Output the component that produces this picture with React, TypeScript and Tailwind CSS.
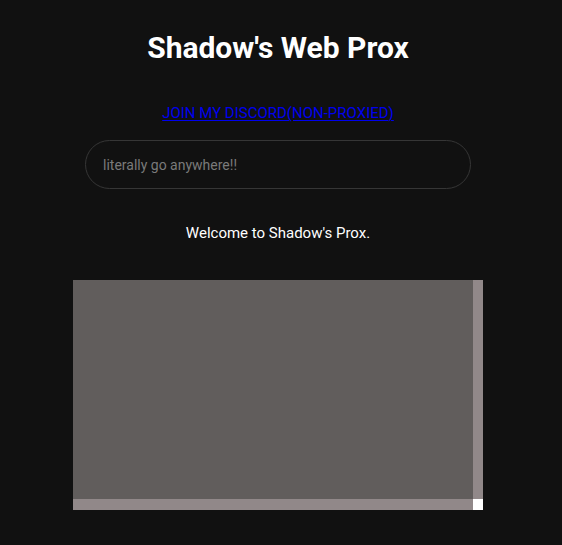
import React from "react";

export default function App() {
  return (
    <div className="min-h-[545px] w-full bg-[#111111] font-['Roboto',sans-serif]">
      <div className="flex w-[556px] flex-col items-center">
        <h1 className="mt-[30px] text-[30px] font-bold leading-[36px] text-white">Shadow's Web Prox</h1>
        <a href="#" className="mt-[38px] text-[15px] leading-[18px] text-[#0000ee] underline decoration-1 underline-offset-2">
          JOIN MY DISCORD(NON-PROXIED)
        </a>
        <input
          type="text"
          placeholder="literally go anywhere!!"
          className="mt-[18px] h-[49px] w-[386px] rounded-full border border-[#363636] bg-[#111111] px-[17px] text-[14px] text-white placeholder:text-[#7a7a7a] outline-none"
        />
        <p className="mt-[35px] text-[15px] leading-[18px] text-white">Welcome to Shadow's Prox.</p>
        <div className="mt-[38px] grid h-[230px] w-[410px] grid-cols-[1fr_10px] grid-rows-[1fr_11px]">
          <div className="bg-[#615d5c]" />
          <div className="bg-[#918889]" />
          <div className="bg-[#918889]" />
          <div className="bg-white" />
        </div>
      </div>
    </div>
  );
}
